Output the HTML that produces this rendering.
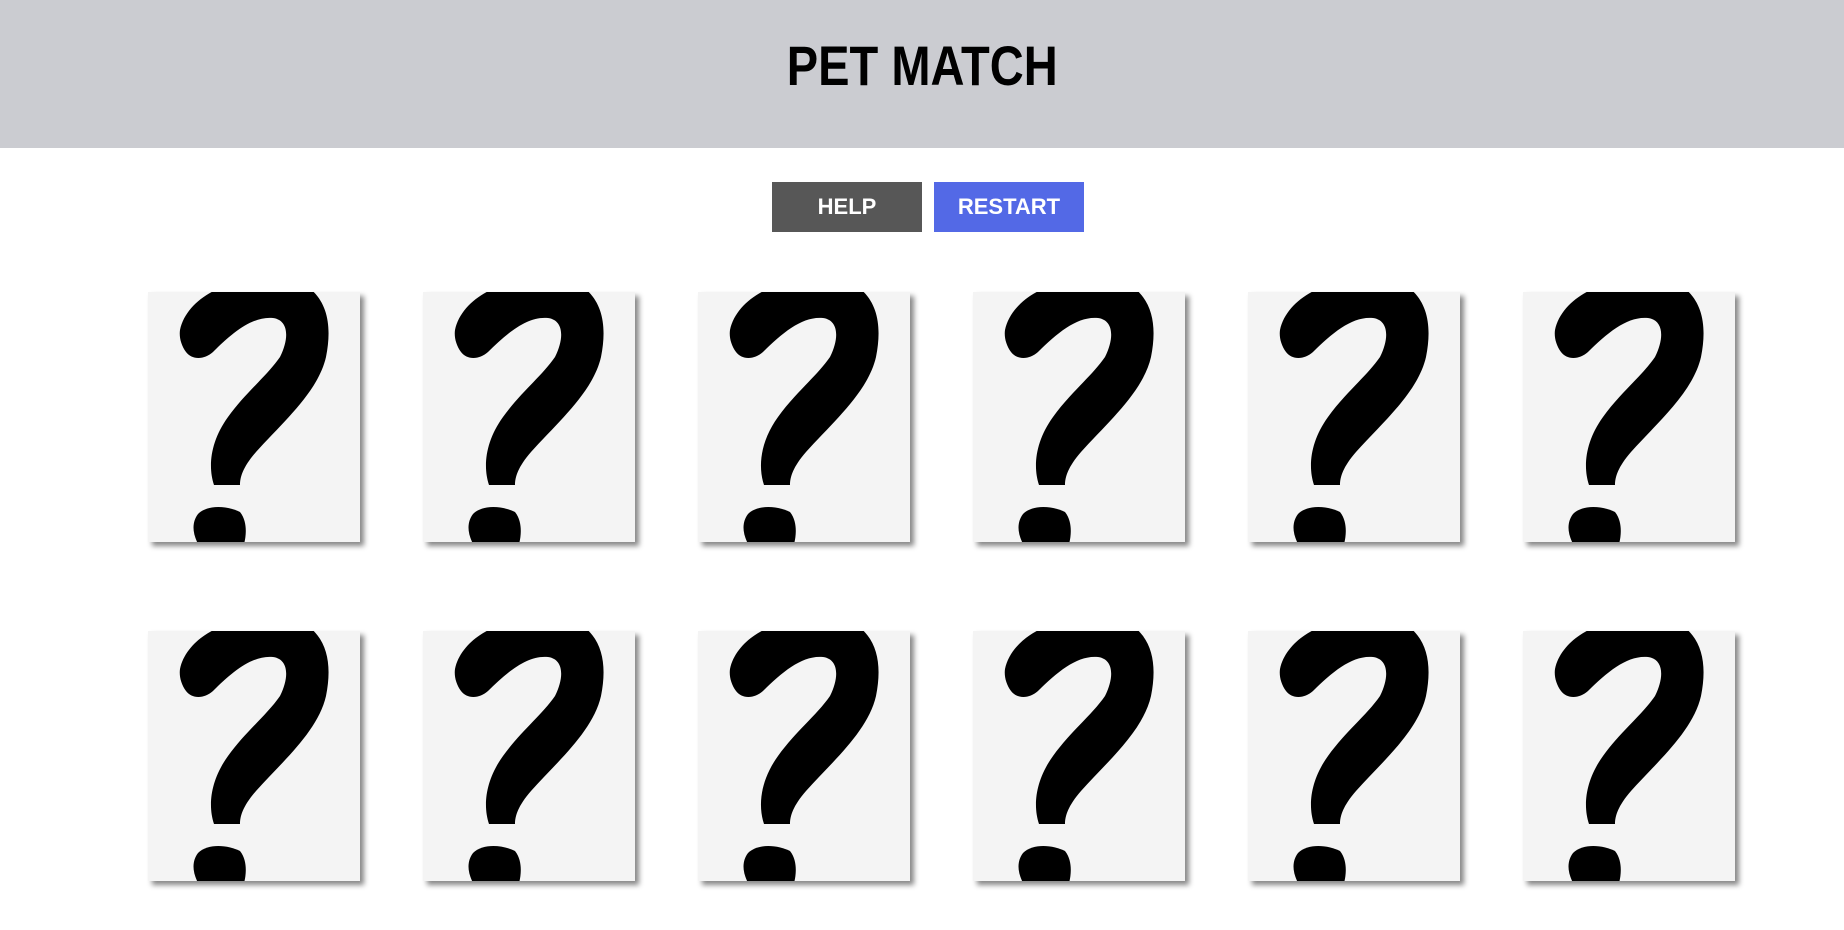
<!DOCTYPE html>
<html><head><meta charset="utf-8"><style>
html,body{margin:0;padding:0;width:1844px;height:930px;background:#fff;overflow:hidden;font-family:"Liberation Sans",sans-serif}
.hdr{position:absolute;left:0;top:0;width:1844px;height:148px;background:#cbccd1}
.title{position:absolute;left:0;width:1844px;top:36px;text-align:center;font-weight:bold;font-size:56px;line-height:60px;color:#000}
.title span{display:inline-block;transform:scaleX(0.84)}
.btn{position:absolute;top:182px;width:150px;height:50px;color:#fff;font-size:22px;font-weight:bold;line-height:50px;text-align:center}
.card{position:absolute;width:212px;height:250px;background:#f4f4f4;box-shadow:4px 4px 5px #888;overflow:hidden}
.card svg{display:block}
</style></head><body>
<div class="hdr"></div>
<div class="title"><span>PET MATCH</span></div>
<div class="btn" style="left:772px;background:#575757">HELP</div>
<div class="btn" style="left:934px;background:#5369e6">RESTART</div>
<svg width="0" height="0" style="position:absolute"><defs><g id="q">
<path d="M 32 38 C 36 18, 55 2, 75 -5 L 160 -5 C 180 10, 184 35, 178 65 C 170 100, 135 130, 108 160 C 95 175, 92 185, 92 193 L 66 193 C 60 175, 62 150, 80 125 C 98 100, 118 85, 132 65 C 142 45, 140 28, 125 26 C 105 24, 85 40, 65 60 C 56 68, 44 68, 38 60 C 33 53, 31 45, 32 38 Z" fill="#000"/>
<path d="M 50 222 C 60 212, 80 214, 92 220 C 100 230, 98 245, 96 252 L 50 252 C 44 240, 44 230, 50 222 Z" fill="#000"/>
</g></defs></svg>
<div id="cards"></div>
<script>
var h='';var xs=[148,423,698,973,1248,1523],ys=[292,631];
ys.forEach(function(y){xs.forEach(function(x){h+='<div class="card" style="left:'+x+'px;top:'+y+'px"><svg width="212" height="250" viewBox="0 0 212 250"><use href="#q"/></svg></div>';});});
document.getElementById('cards').innerHTML=h;
</script>
</body></html>
